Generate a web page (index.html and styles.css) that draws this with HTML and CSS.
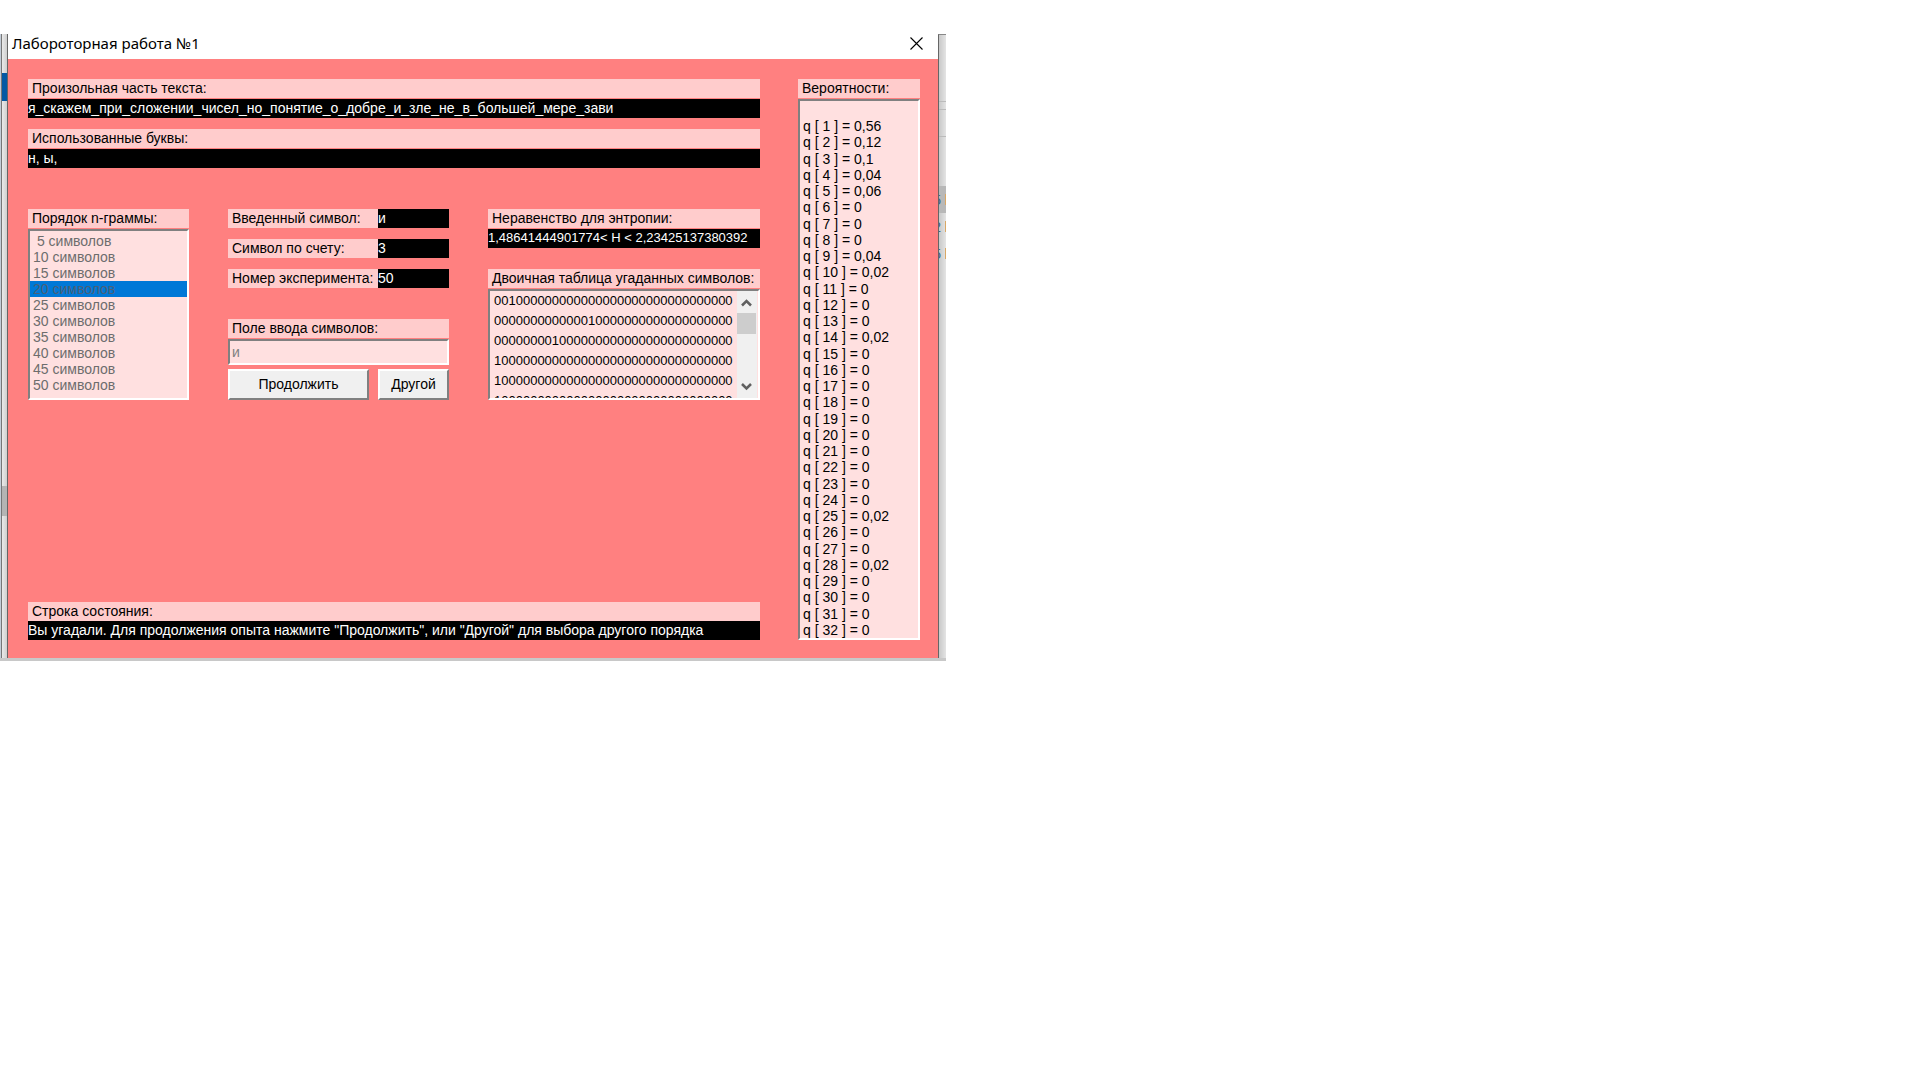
FILE: index.html
```html
<!DOCTYPE html>
<html lang="ru">
<head>
<meta charset="utf-8">
<title>Лабороторная работа №1</title>
<link rel="stylesheet" href="styles.css">
</head>
<body>
<div class="desktop">
  <div class="edge edge-left" aria-hidden="true">
    <span class="tab"></span>
    <span class="thumb"></span>
  </div>
  <main class="window">
    <header class="titlebar">
      <h1 class="title">Лабороторная работа №1</h1>
      <button class="close" type="button" aria-label="Закрыть">
        <svg width="13" height="13" viewBox="0 0 13 13"><path d="M.5 .5l12 12M12.5 .5l-12 12" stroke="#000" stroke-width="1.1" fill="none"/></svg>
      </button>
    </header>
    <form class="client">
      <div class="main">
        <div class="field">
          <label class="caption" for="sample">Произольная часть текста:</label>
          <output class="value" id="sample">я_скажем_при_сложении_чисел_но_понятие_о_добре_и_зле_не_в_большей_мере_зави</output>
        </div>
        <div class="field">
          <label class="caption" for="used">Использованные буквы:</label>
          <output class="value" id="used">н, ы,</output>
        </div>
        <div class="panels">
          <div class="order">
            <label class="caption" for="order">Порядок n-граммы:</label>
            <select class="sunken order-list" id="order" size="10" disabled>
              <option>&nbsp;5 символов</option>
              <option>10 символов</option>
              <option>15 символов</option>
              <option selected>20 символов</option>
              <option>25 символов</option>
              <option>30 символов</option>
              <option>35 символов</option>
              <option>40 символов</option>
              <option>45 символов</option>
              <option>50 символов</option>
            </select>
          </div>
          <div class="experiment">
            <div class="pairs">
              <div class="pair"><label class="caption" for="entered">Введенный символ:</label><output class="value" id="entered">и</output></div>
              <div class="pair"><label class="caption" for="count">Символ по счету:</label><output class="value" id="count">3</output></div>
              <div class="pair"><label class="caption" for="number">Номер эксперимента:</label><output class="value" id="number">50</output></div>
            </div>
            <div class="entry">
              <div class="field">
                <label class="caption" for="symbol">Поле ввода символов:</label>
                <input class="sunken symbol" id="symbol" type="text" value="и" disabled>
              </div>
              <div class="actions">
                <button class="button" type="button">Продолжить</button>
                <button class="button" type="button">Другой</button>
              </div>
            </div>
          </div>
          <div class="results">
            <div class="field">
              <label class="caption" for="entropy">Неравенство для энтропии:</label>
              <output class="value numeric" id="entropy">1,48641444901774&lt; H &lt; 2,23425137380392</output>
            </div>
            <div class="guesses">
              <label class="caption" for="table">Двоичная таблица угаданных символов:</label>
              <div class="sunken memo">
                <textarea class="bits" id="table" readonly>001000000000000000000000000000000
000000000000010000000000000000000
000000001000000000000000000000000
100000000000000000000000000000000
100000000000000000000000000000000
100000000000000000000000000000000</textarea>
                <div class="scrollbar" aria-hidden="true">
                  <svg class="arrow" viewBox="0 0 19 20"><path d="M5 14.500l4.500-4.500 4.500 4.500" /></svg>
                  <span class="knob"></span>
                  <svg class="arrow arrow-down" viewBox="0 0 19 20"><path d="M5 6l4.500 4.500 4.500-4.500" /></svg>
                </div>
              </div>
            </div>
          </div>
        </div>
        <div class="field status">
          <label class="caption" for="status">Строка состояния:</label>
          <output class="value" id="status">Вы угадали. Для продолжения опыта нажмите "Продолжить", или "Другой" для выбора другого порядка</output>
        </div>
      </div>
      <section class="probabilities">
        <h2 class="caption">Вероятности:</h2>
        <ul class="sunken odds">
          <li>q [ 1 ] = 0,56</li><li>q [ 2 ] = 0,12</li><li>q [ 3 ] = 0,1</li><li>q [ 4 ] = 0,04</li>
          <li>q [ 5 ] = 0,06</li><li>q [ 6 ] = 0</li><li>q [ 7 ] = 0</li><li>q [ 8 ] = 0</li>
          <li>q [ 9 ] = 0,04</li><li>q [ 10 ] = 0,02</li><li>q [ 11 ] = 0</li><li>q [ 12 ] = 0</li>
          <li>q [ 13 ] = 0</li><li>q [ 14 ] = 0,02</li><li>q [ 15 ] = 0</li><li>q [ 16 ] = 0</li>
          <li>q [ 17 ] = 0</li><li>q [ 18 ] = 0</li><li>q [ 19 ] = 0</li><li>q [ 20 ] = 0</li>
          <li>q [ 21 ] = 0</li><li>q [ 22 ] = 0</li><li>q [ 23 ] = 0</li><li>q [ 24 ] = 0</li>
          <li>q [ 25 ] = 0,02</li><li>q [ 26 ] = 0</li><li>q [ 27 ] = 0</li><li>q [ 28 ] = 0,02</li>
          <li>q [ 29 ] = 0</li><li>q [ 30 ] = 0</li><li>q [ 31 ] = 0</li><li>q [ 32 ] = 0</li>
        </ul>
      </section>
    </form>
  </main>
  <div class="edge edge-right" aria-hidden="true">
    <span class="ribbon"></span>
    <span class="row row-selected">5</span>
    <span class="row">2</span>
    <span class="row">5</span>
  </div>
</div>
</body>
</html>
```
FILE: styles.css
```css
* { box-sizing: border-box; }

body {
  margin: 0;
  padding-top: 34px;
  background: #fff;
  color: #000;
  font: 14px/19px "Liberation Sans", Arial, sans-serif;
}

.desktop {
  display: grid;
  grid-template-columns: 8px 1fr 8px;
  max-width: 946px;
  padding-bottom: 3px;
  background: #c8c8c8;
}

.edge {
  display: flex;
  flex-direction: column;
  overflow: hidden;
}

.edge-left {
  padding-top: 39px;
  border-left: 1px solid #c3ccd8;
  border-right: 1px solid #666;
  background: linear-gradient(to right, #777 0 1px, #eaeaea 1px, #cfcfcf);
}

.tab { height: 28px; margin-left: 1px; background: #0459a4; }
.thumb { height: 30px; margin: 385px 0 0 1px; background: #b4b4b4; }

.edge-right {
  border-top: 1px solid #888;
  border-left: 1px solid #666;
  background: linear-gradient(to right, #c8c8c8, #e4e4e4);
}

.ribbon {
  height: 102px;
  margin-bottom: 49px;
  background: linear-gradient(#bbb, #bbb) 0 66px / 100% 1px no-repeat,
    linear-gradient(#bbb, #bbb) 0 74px / 100% 1px no-repeat;
  border-bottom: 1px solid #bbb;
}

.row {
  display: flex;
  justify-content: flex-end;
  height: 27px;
  padding-right: 5px;
  background: linear-gradient(#d9a866, #d9a866) right center / 1px 11px no-repeat;
  color: #3b6291;
  line-height: 28px;
}

.row-selected { background-color: #b8b8b8; }

.window { min-width: 0; background: #ff8080; }

.titlebar {
  display: flex;
  justify-content: space-between;
  align-items: center;
  height: 25px;
  padding: 0 14px 7px 4px;
  background: #fff;
}

.title {
  margin: 0;
  font: 15px/18px "Noto Sans", "Segoe UI", sans-serif;
}

.close {
  display: flex;
  padding: 1px;
  border: 0;
  background: none;
}

.client {
  display: grid;
  grid-template-columns: 1fr 122px;
  gap: 38px;
  padding: 20px 18px 18px 20px;
}

.main { display: flex; flex-direction: column; min-width: 0; }

.field, .order, .guesses, .probabilities {
  display: flex;
  flex-direction: column;
  gap: 1px;
  min-width: 0;
}

.main > .field { margin-bottom: 11px; }

.caption {
  margin: 0;
  height: 19px;
  padding-left: 4px;
  background: #ffcccc;
  font-size: 14px;
  font-weight: normal;
  line-height: 18px;
  white-space: nowrap;
}

.value {
  display: block;
  height: 19px;
  background: #000;
  color: #fff;
  line-height: 18px;
  white-space: nowrap;
  overflow: hidden;
}

.numeric { font-size: 13px; }

.sunken {
  margin: 0;
  border: 2px solid;
  border-color: #808080 #fff #fff #808080;
  border-radius: 0;
  background: #ffe0e0;
}

.panels {
  display: grid;
  grid-template-columns: 161px 221px 1fr;
  column-gap: 39px;
  height: 191px;
  margin-top: 30px;
}

.order-list {
  flex: 1;
  padding: 2px 0;
  color: #6d6d6d;
  font: 14px/16px "Liberation Sans", Arial, sans-serif;
  overflow: hidden;
  opacity: 1;
}

.order-list option {
  height: 16px;
  min-height: 16px;
  padding: 0 3px;
  color: #6d6d6d;
}

.order-list option:checked {
  background: linear-gradient(#0078d7, #0078d7);
  color: #4a6078;
}

.experiment, .results {
  display: flex;
  flex-direction: column;
  justify-content: space-between;
  min-width: 0;
}

.pairs { display: grid; gap: 11px; }
.pair { display: grid; grid-template-columns: 150px 1fr; }
.entry { display: grid; gap: 4px; }

.symbol {
  height: 26px;
  width: 100%;
  padding: 0 2px;
  color: #808080;
  font: inherit;
}

.actions { display: grid; grid-template-columns: 141px 1fr; gap: 9px; }

.button {
  height: 31px;
  padding: 0;
  border: 2px solid;
  border-color: #fff #808080 #808080 #fff;
  border-radius: 0;
  background: #f0f0f0;
  color: #000;
  font: inherit;
}

.memo { display: flex; height: 111px; }

.bits {
  flex: 1;
  min-width: 0;
  padding: 0 0 0 4px;
  border: 0;
  background: none;
  color: #000;
  font: 13px/20px "Liberation Sans", Arial, sans-serif;
  white-space: pre;
  overflow: hidden;
  resize: none;
}

.scrollbar {
  display: flex;
  flex-direction: column;
  width: 20px;
  margin-right: 1px;
  padding-right: 1px;
  background: #f0f0f0;
}

.arrow { height: 20px; fill: none; stroke: #606060; stroke-width: 2.5; }
.arrow-down { margin-top: auto; }
.knob { height: 21px; margin-top: 2px; background: #cdcdcd; }

.main > .status { margin: auto 0 0; gap: 0; }

.odds {
  display: grid;
  grid-auto-rows: 1fr;
  height: 541px;
  padding: 17px 0 0 3px;
  line-height: 16px;
  list-style: none;
  white-space: pre;
}
```
